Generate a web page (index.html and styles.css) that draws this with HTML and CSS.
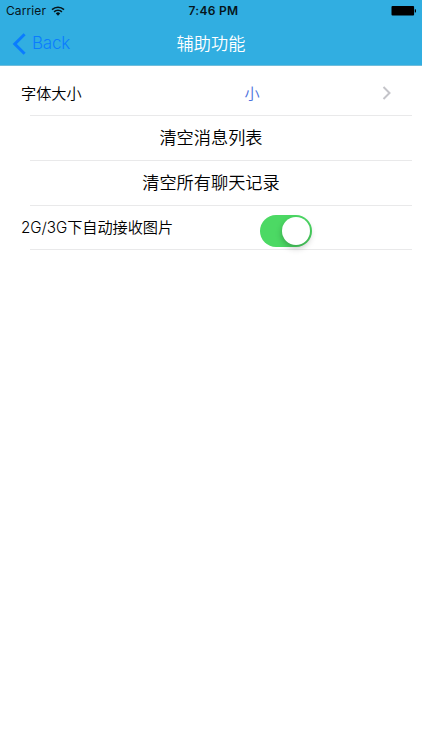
FILE: index.html
```
<!DOCTYPE html>
<html lang="zh-CN">
<head>
    <meta charset="UTF-8">
    <meta name="viewport" content="width=device-width, initial-scale=1.0">
    <title>辅助功能</title>
    <link rel="stylesheet" href="styles.css">
</head>
<body>
    <header class="header">
        <div class="status-bar">
            <div class="carrier">
                <span class="carrier-name">Carrier</span>
                <svg class="wifi" width="14" height="10" viewBox="0 0 14 10">
                    <path d="M1 3.6a8.6 8.6 0 0 1 12 0M3.1 5.9a5.6 5.6 0 0 1 7.8 0" fill="none" stroke="#06151b" stroke-width="1.5"/>
                    <path d="M4.8 7.4a3.2 3.2 0 0 1 4.4 0L7 9.7z" fill="#06151b"/>
                </svg>
            </div>
            <div class="time">7:46 PM</div>
            <div class="battery">
                <svg width="26" height="12" viewBox="0 0 26 12">
                    <rect x="0.5" y="1" width="22.6" height="9.6" rx="1" fill="#000"/>
                    <path d="M23.8 4.2h.6q.6 0 .6.6v2q0 .6-.6.6h-.6z" fill="#000"/>
                </svg>
            </div>
        </div>
        <nav class="nav-bar">
            <a href="#" class="back">
                <svg width="14" height="22" viewBox="0 0 14 22">
                    <path d="M12.6 1.3L2.8 11l9.8 9.7" fill="none" stroke="#0a7cff" stroke-width="3"/>
                </svg>
                <span class="back-text">Back</span>
            </a>
            <h1 class="title">辅助功能</h1>
        </nav>
    </header>

    <main class="settings">
        <div class="row row-font">
            <span class="label">字体大小</span>
            <span class="value">小</span>
            <svg class="arrow" width="10" height="14" viewBox="0 0 10 14">
                <path d="M1.5 1l6 6-6 6" fill="none" stroke="#c4c4c9" stroke-width="2"/>
            </svg>
        </div>
        <div class="row row-action">清空消息列表</div>
        <div class="row row-action">清空所有聊天记录</div>
        <div class="row row-switch">
            <span class="label">2G/3G下自动接收图片</span>
            <span class="switch"><span class="switch-knob"></span></span>
        </div>
    </main>
</body>
</html>
```
FILE: styles.css
```
* {
    margin: 0;
    padding: 0;
    box-sizing: border-box;
}

body {
    background: #fff;
    min-height: 100vh;
    color: #000;
    font-family: Inter, 'Noto Sans CJK SC', sans-serif;
}

.header {
    height: 66px;
    background: #31aee1;
    border-bottom: 1px solid #70bddb;
}

.status-bar {
    display: grid;
    grid-template-columns: 1fr auto 1fr;
    align-items: center;
    height: 22px;
    padding: 0 5px 0 6px;
    font-size: 12px;
    color: #06151b;
}

.carrier {
    display: flex;
    align-items: center;
    gap: 5px;
}

.carrier-name {
    padding-bottom: 1px;
    letter-spacing: 0.1px;
}

.time {
    padding: 0 0 1px 4px;
    font-weight: 600;
    letter-spacing: 0.3px;
}

.battery {
    display: flex;
    justify-content: flex-end;
}

.nav-bar {
    display: grid;
    grid-template-columns: 1fr auto 1fr;
    align-items: center;
    height: 43px;
    padding: 0 12px;
}

.back {
    display: flex;
    align-items: center;
    gap: 6px;
    color: #0a7cff;
    font-size: 17px;
    font-weight: 300;
    text-decoration: none;
}

.back-text {
    padding-bottom: 2px;
    letter-spacing: -0.2px;
}

.title {
    padding-bottom: 2px;
    color: #fff;
    font-size: 17.2px;
    font-weight: 350;
}

.settings {
    padding: 0 10px 0 30px;
    font-weight: 350;
}

.row {
    display: flex;
    align-items: center;
    height: 45px;
    border-bottom: 1px solid #e9e9ea;
}

.label {
    margin-left: -9px;
    padding-bottom: 3px;
    font-size: 15.2px;
    letter-spacing: -0.05px;
}

.row-font {
    height: 50px;
    padding: 4px 20px 0 0;
}

.row-font .label,
.row-font .value {
    padding-bottom: 1px;
}

.value {
    margin-left: 163px;
    color: #4b70dc;
    font-size: 15.2px;
}

.arrow {
    margin-left: auto;
}

.row-action {
    justify-content: center;
    padding: 0 20px 3px 0;
    font-size: 17.2px;
}

.row-switch {
    height: 44px;
    justify-content: space-between;
    padding-right: 100px;
}

.switch {
    display: flex;
    justify-content: flex-end;
    width: 52px;
    height: 32px;
    margin-top: 7px;
    padding: 2px;
    border-radius: 16px;
    background: #4cd964;
}

.switch-knob {
    width: 28px;
    height: 28px;
    border-radius: 50%;
    background: #fff;
    box-shadow: 0 3px 6px rgba(0, 0, 0, 0.25);
}
```
